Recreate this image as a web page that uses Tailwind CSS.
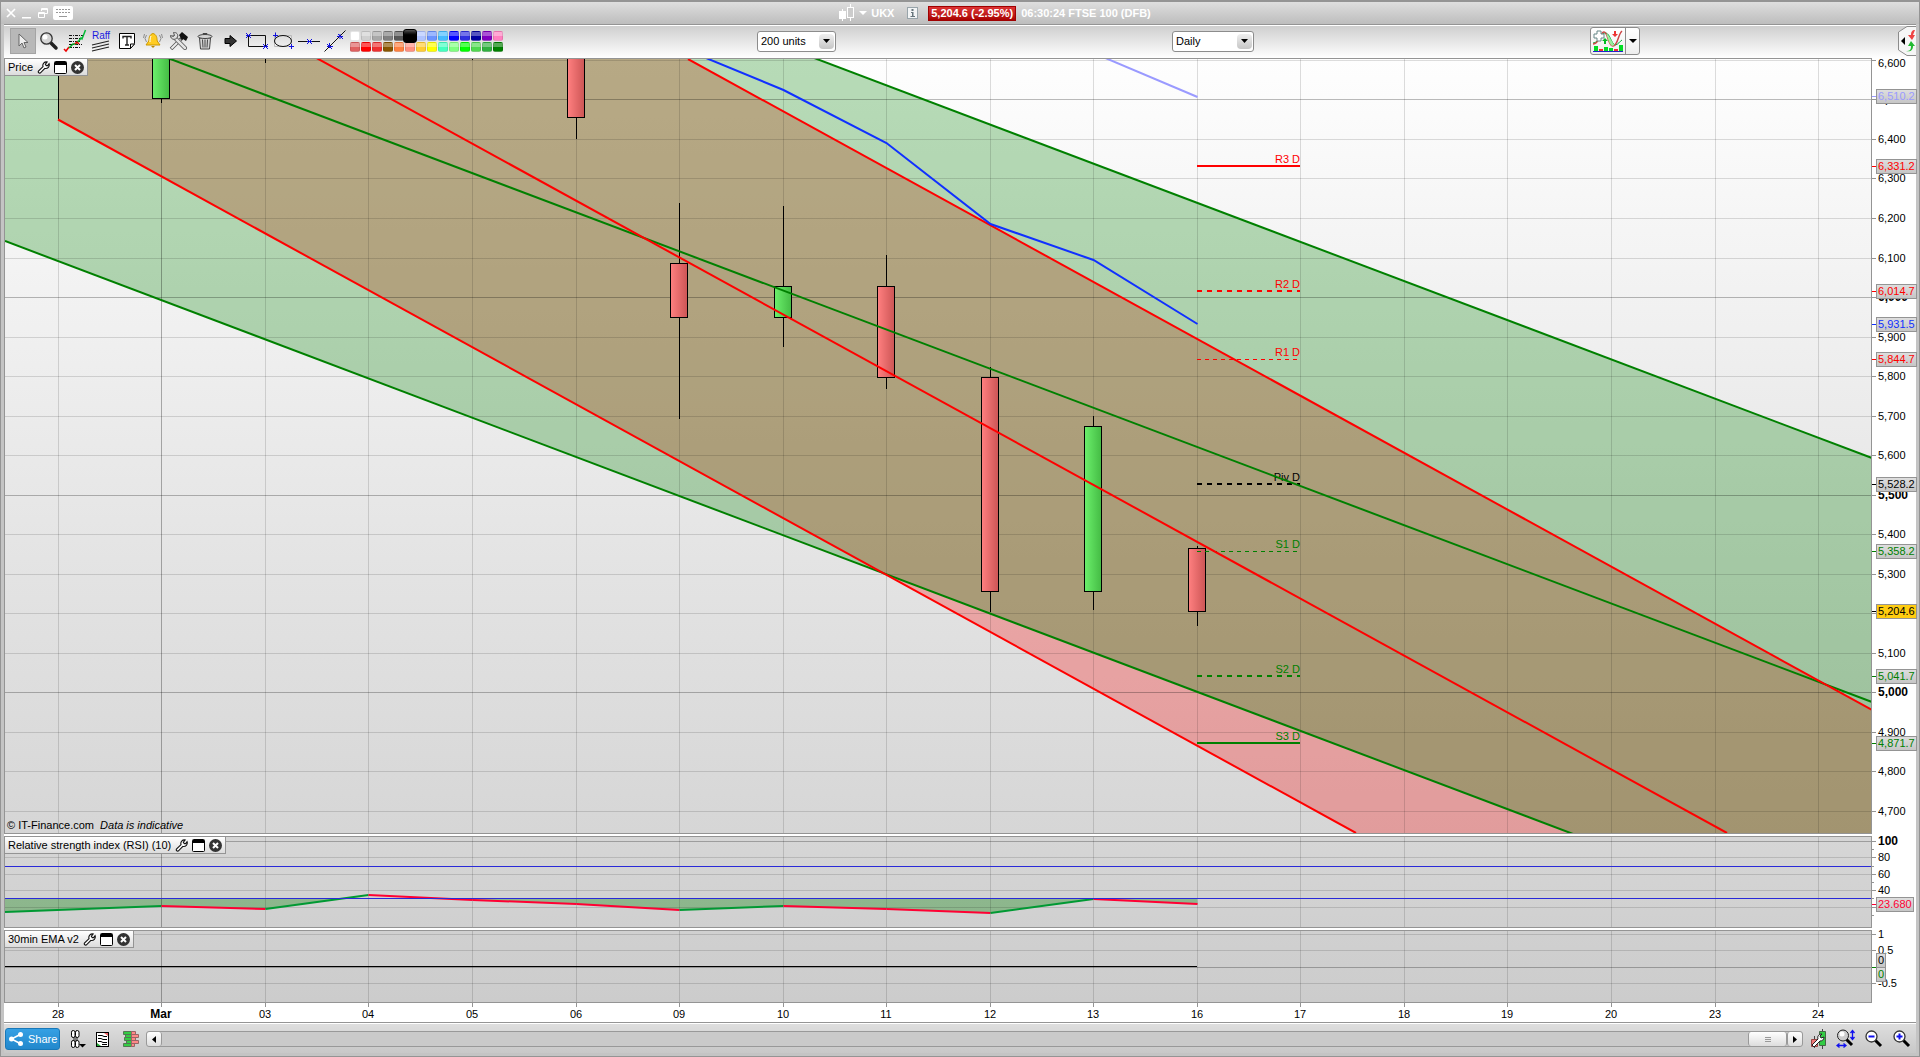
<!DOCTYPE html>
<html lang="en">
  <head>
    <meta charset="UTF-8" />
    <meta name="viewport" content="width=device-width, initial-scale=1.0" />
    <title>UKX - FTSE 100 (DFB)</title>
    <script src="https://cdn.jsdelivr.net/npm/@tailwindcss/browser@4"></script>
  </head>
  <body
    class="h-screen flex flex-col overflow-hidden border border-t-2 border-[#949494] bg-[#c4c4c4] text-[11px] leading-4 text-black font-['Liberation_Sans',Arial,sans-serif]"
  >
    <!-- Title bar -->
    <header
      class="h-[22px] shrink-0 flex items-center bg-linear-to-b from-[#dedede] to-[#bdbdbd] text-white font-bold"
    >
      <div class="w-[70px] flex items-center gap-1 pl-1">
        <button aria-label="Close" class="w-3">
          <svg width="12" height="12" viewBox="0 0 12 12" stroke="#fff" stroke-width="1.700"><path d="M2 2l8 8M10 2l-8 8" /></svg>
        </button>
        <button aria-label="Minimise" class="w-3">
          <svg width="12" height="12" viewBox="0 0 12 12"><path d="M1 10h9v1.500H1z" fill="#fff" /></svg>
        </button>
        <button aria-label="Restore" class="w-3">
          <svg width="12" height="12" viewBox="0 0 12 12" fill="none" stroke="#fff"><path d="M4.500 4V1.500h6v5H8M4 2.500h7M1.500 5.500h6v5h-6zM1 6.500h7" /></svg>
        </button>
        <button aria-label="Keyboard" class="w-5">
          <svg width="20" height="14" viewBox="0 0 20 14">
            <rect width="20" height="14" rx="2" fill="#fff" />
            <path d="M3 3.500h14M3 6.500h14" stroke="#999" stroke-dasharray="2 1" /><path d="M6 10.500h8" stroke="#999" />
          </svg>
        </button>
      </div>
      <div class="flex-1 flex items-center justify-center">
        <svg width="16" height="18" viewBox="0 0 16 18" stroke="#fff">
          <path d="M3.500 5v12M11.500 0v17" /><rect x=".5" y="7.500" width="6" height="7" fill="#fff" />
          <rect x="8.500" y="3.500" width="6" height="10" fill="#ccc" />
        </svg>
        <svg class="ml-1" width="8" height="4" viewBox="0 0 8 4"><path d="M0 0h8L4 4z" fill="#fff" /></svg>
        <span class="ml-1 w-9">UKX</span>
        <svg width="11" height="12" viewBox="0 0 11 12">
          <rect x=".5" y=".5" width="10" height="11" fill="#f2f4f5" stroke="#98a4aa" />
          <path d="M4.500 2h2v2h-2zM4 5h2.500v4H8v1H3.500V9H5V6H4z" fill="#67757c" />
        </svg>
        <span class="ml-[10px] px-[2px] h-[15px] leading-[13px] border border-[#a00000] bg-linear-to-b from-[#dd3434] to-[#aa0000]">5,204.6 (-2.95%)</span>
        <span class="ml-[5px]">06:30:24 FTSE 100 (DFB)</span>
      </div>
    </header>

    <main class="flex-1 min-h-0 flex flex-col mx-[3px] mb-[3px] border-t border-[#949494]">
      <!-- Toolbar -->
      <div class="h-[33px] shrink-0 flex items-center pb-[2px] border-t border-white bg-linear-to-b from-[#cfcfcf] to-white">
        <div class="flex pl-[6px]">
          <button aria-label="Pointer" class="w-[26px] h-[26px] flex items-center justify-center bg-[#b8b8b8] border border-[#a4a4a4]">
            <svg width="12" height="16" viewBox="0 0 12 16"><path d="M2 1v12l3-3 2 5 2-1-2-4.500h4z" fill="#eee" stroke="#666" /></svg>
          </button>
          <button aria-label="Zoom" class="w-[26px] flex items-center justify-center">
            <svg width="20" height="20" viewBox="0 0 20 20">
              <path d="M11 11l6 6" stroke="#222" stroke-width="3.500" stroke-linecap="round" />
              <circle cx="7.500" cy="7.500" r="5.700" fill="#d4d4d4" stroke="#333" stroke-width="1.300" /><circle cx="6" cy="6" r="2.500" fill="#fff" />
            </svg>
          </button>
          <button aria-label="Indicators" class="w-[26px] flex items-center justify-center">
            <svg width="24" height="24" viewBox="0 0 24 24" fill="none">
              <path d="M6 6.500h14M6 9.500h13M6 12.500h12M6 15.500h13M6 18.500h12" stroke="#111" stroke-dasharray="3 1 1 1" />
              <path d="M1 20l2 2 3-4" stroke="#e00" stroke-width="1.500" /><path d="M6 19l4-4 3 0 2-3" stroke="#0a2" stroke-width="1.500" /><path d="M12 15l2-2 2 2" stroke="#e00" stroke-width="1.500" />
              <path d="M15 13l3-4 1 1 3.500-9" stroke="#0b3" stroke-width="1.500" />
            </svg>
          </button>
          <button aria-label="Raff regression" class="w-[26px] flex flex-col items-center justify-center text-[10px] leading-[9px] text-[#1a1ae0]">
            Raff
            <svg width="20" height="12" viewBox="0 0 20 12" stroke="#222" stroke-width="1.200"><path d="M1 5l17-4M1 8l17-4M1 11l17-4" /></svg>
          </button>
          <button aria-label="Text" class="w-[26px] flex items-center justify-center">
            <svg width="16" height="16" viewBox="0 0 16 16">
              <path d="M.5.500h15v10l-4 5H.5z" fill="#fff" stroke="#000" /><path d="M15.500 11h-4v4.500z" fill="#fff" stroke="#000" />
              <path d="M4 5.500v-2h8v2M8 3.500v8.500M6 12h4" fill="none" stroke="#222" stroke-width="1.400" />
            </svg>
          </button>
          <button aria-label="Alert" class="w-[26px] flex items-center justify-center">
            <svg width="20" height="18" viewBox="0 0 20 18">
              <path d="M10 1.500c3.500 1 4 4 4.200 7.500l2.800 4H3l2.800-4C6 5.500 6.500 2.500 10 1.500z" fill="#fc2" stroke="#c90" /><path d="M8 4c-1 2-1 4-1 6" fill="none" stroke="#fff" />
              <path d="M8 14h4l-2 2z" fill="#b80" /><path d="M3.500 3L2 6.500 3.500 10M1.500 2L.5 6M16.500 3L18 6.500 16.500 10M18.500 2l1 4" fill="none" stroke="#777" stroke-width=".8" />
            </svg>
          </button>
          <button aria-label="Tools" class="w-[26px] flex items-center justify-center">
            <svg width="20" height="18" viewBox="0 0 20 18">
              <path d="M2 17L13 6" stroke="#555" stroke-width="3.500" /><path d="M2.500 16.500l9-9" stroke="#eee" stroke-width="2" />
              <path d="M5 5l11 11" stroke="#555" stroke-width="4" stroke-linecap="round" /><path d="M5 5l11 11" stroke="#e4e4e4" stroke-width="2.500" stroke-linecap="round" />
              <path d="M1.500 3.500l3 1 1-1-1-3c3-.5 5 2 4 4.500C7 8.500 1.500 8 1.500 3.500z" fill="#ddd" stroke="#555" /><path d="M10 3l3-3 6 5-2 4-3-2-1 1z" fill="#111" />
            </svg>
          </button>
          <button aria-label="Delete" class="w-[26px] flex items-center justify-center">
            <svg width="16" height="18" viewBox="0 0 16 18" stroke="#444" fill="#d4d4d4">
              <path d="M2.500 6h11L12.500 17h-9z" /><path d="M5.500 7.500l.5 8M8 7.500v8M10.500 7.500l-.5 8" /><ellipse cx="8" cy="4.500" rx="7" ry="2" /><path d="M6 2.500v-1h4v1" fill="none" />
            </svg>
          </button>
          <button aria-label="Arrow" class="w-[26px] flex items-center justify-center">
            <svg width="14" height="14" viewBox="0 0 14 14"><path d="M1 4.500h5V1.500L12.500 7 6 12.500v-3H1z" fill="#333" stroke="#000" /></svg>
          </button>
          <button aria-label="Rectangle" class="w-[26px] flex items-center justify-center">
            <svg width="24" height="18" viewBox="0 0 24 18" fill="none">
              <path d="M3.500 3.500h17v11h-17z" stroke="#111" /><path d="M1 1l5 5M6 1L1 6M1 3.500h5M18 12l5 5M23 12l-5 5M18 14.500h5" stroke="#11d" />
            </svg>
          </button>
          <button aria-label="Ellipse" class="w-[26px] flex items-center justify-center">
            <svg width="22" height="18" viewBox="0 0 22 18" fill="none">
              <path d="M2.500 3.500h17v11h-17z" stroke="#bbb" /><ellipse cx="11" cy="9" rx="8.500" ry="5.500" stroke="#111" /><path d="M3.500.5v5M1 3.500h5M19.500 12v5M17 14.500h5" stroke="#11d" />
            </svg>
          </button>
          <button aria-label="Horizontal line" class="w-[26px] flex items-center justify-center">
            <svg width="22" height="10" viewBox="0 0 22 10"><path d="M0 5.500h22" stroke="#111" /><path d="M9 3l5 5M14 3L9 8M9 5.500h5" stroke="#11d" /></svg>
          </button>
          <button aria-label="Trend line" class="w-[26px] flex items-center justify-center">
            <svg width="22" height="22" viewBox="0 0 22 22"><path d="M.5 21.500l21-21" stroke="#111" /><path d="M3 14l5 5M5.500 13v5M3 16.500h6M14 4l5 5M16 4v5M13 6.500h6" stroke="#11d" /></svg>
          </button>
        </div>
        <div id="palette" class="ml-[2px] grid grid-cols-14 gap-px w-[153px]"></div>
        <div class="grow-[254]"></div>
        <div class="relative w-[79px]">
          <select aria-label="Units" class="appearance-none block w-full h-[21px] pl-[3px] leading-[19px] border border-[#8c8c8c] rounded-[3px] bg-white"><option>200 units</option></select>
          <span class="pointer-events-none absolute right-[2px] top-[3px] w-[15px] h-[15px] rounded-sm bg-linear-to-b from-[#efefef] to-[#c6c6c6] flex items-center justify-center"><svg width="7" height="4" viewBox="0 0 7 4"><path d="M0 0h7L3.500 4z" /></svg></span>
        </div>
        <div class="grow-[336]"></div>
        <div class="relative w-[82px]">
          <select aria-label="Period" class="appearance-none block w-full h-[21px] pl-[3px] leading-[19px] border border-[#8c8c8c] rounded-[3px] bg-white"><option>Daily</option></select>
          <span class="pointer-events-none absolute right-[2px] top-[3px] w-[15px] h-[15px] rounded-sm bg-linear-to-b from-[#efefef] to-[#c6c6c6] flex items-center justify-center"><svg width="7" height="4" viewBox="0 0 7 4"><path d="M0 0h7L3.500 4z" /></svg></span>
        </div>
        <div class="grow-[336]"></div>
        <div class="flex w-[50px] h-7 border border-[#8c8c8c] rounded-[3px] bg-linear-to-b from-white to-[#eee]">
          <button aria-label="Add indicator" class="w-[34px] flex items-center justify-center">
            <svg width="32" height="24" viewBox="0 0 32 24" fill="none">
              <path d="M1 14c6 0 8-11 13-10 4 1 5 10 9 12 3 0 5-4 7-5" stroke="#0a3" /><path d="M1 15c7 0 7-12 11-12s4 14 9 14 5-12 9-15" stroke="#c44" stroke-width="1.500" />
              <path d="M14 5c3 0 6 10 9 11l-3 1c-3-2-4-8-6-12z" fill="#9e9" /><path d="M5 2h4v3h3v4H9v3H5V9H2V5h3z" fill="#fff" stroke="#688" />
              <path d="M12 15v-3h-2l3-3 3 3h-2v3z" fill="#0b2" /><path d="M22 2h2v3h2l-3 3-3-3h2z" fill="#e33" />
              <path d="M2 17h4v5H2zM12 18h4v4h-4zM17 19h4v3h-4zM27 16h4v6h-4z" fill="#0d2" /><path d="M7 20h4v2H7zM22 20h4v2h-4z" fill="#e33" /><path d="M1 22.500h30" stroke="#22c" />
            </svg>
          </button>
          <button aria-label="More indicators" class="flex-1 flex items-center justify-center border-l border-[#8c8c8c]"><svg width="8" height="4" viewBox="0 0 8 4"><path d="M0 0h8L4 4z" /></svg></button>
        </div>
        <div class="grow-[258]"></div>
        <button aria-label="Open order panel" class="w-[18px]">
          <svg width="18" height="30" viewBox="0 0 18 30">
            <path d="M18 .5H9L.5 6v18L9 29.500h9" fill="#f6f6f6" stroke="#8c8c8c" /><path d="M7 11v8l-4-4z" />
            <path d="M17 4c-3 0-4 2-4 5h-3l4 5 3-5h-2" fill="#e44" /><path d="M8 25c4 0 5-1 5-5h-3l3-5 4 5h-2c0 4-2 6-7 5z" fill="#2b3" />
          </svg>
        </button>
      </div>

      <!-- Charts and their value axes -->
      <div class="flex-1 min-h-0 flex bg-white">
        <div class="flex-1 flex flex-col gap-[2px]">
          <section class="relative flex-1 min-h-0 border border-[#949494] bg-linear-to-b from-[#fefefe] to-[#d6d6d6]">
            <svg id="price" class="absolute inset-0 w-full h-full" viewBox="5 59 1866 774" preserveAspectRatio="none">
              <defs>
                <linearGradient id="up"><stop offset="0" stop-color="#6cf06c" /><stop offset="1" stop-color="#44bb44" /></linearGradient>
                <linearGradient id="down"><stop offset="0" stop-color="#ff8080" /><stop offset="1" stop-color="#cc5555" /></linearGradient>
              </defs>
            </svg>
            <h2 class="absolute left-0 top-0 h-[17px] flex items-center gap-1 pl-[3px] pr-[3px] border-r border-b border-[#949494] bg-linear-to-b from-white to-[#dcdcdc]">Price</h2>
            <p class="absolute left-[2px] bottom-0">© IT-Finance.com &nbsp;<i>Data is indicative</i></p>
          </section>
          <section class="relative h-[92px] border border-[#949494] bg-linear-to-b from-[#d6d6d6] to-[#d0d0d0]">
            <svg id="rsi" class="absolute inset-0 w-full h-full" viewBox="5 837 1866 90" preserveAspectRatio="none"></svg>
            <h2 class="absolute left-0 top-0 h-[17px] flex items-center gap-1 pl-[3px] pr-[3px] border-r border-b border-[#949494] bg-linear-to-b from-white to-[#dcdcdc]">Relative strength index (RSI) (10)</h2>
          </section>
          <section class="relative h-[73px] border border-[#949494] bg-linear-to-b from-[#d0d0d0] to-[#cccccc]">
            <svg id="ema" class="absolute inset-0 w-full h-full" viewBox="5 931 1866 71" preserveAspectRatio="none"></svg>
            <h2 class="absolute left-0 top-0 h-[17px] flex items-center gap-1 pl-[3px] pr-[3px] border-r border-b border-[#949494] bg-linear-to-b from-white to-[#dcdcdc]">30min EMA v2</h2>
          </section>
        </div>
        <div class="w-11 flex flex-col gap-[2px]">
          <div id="priceAxis" class="relative flex-1"></div>
          <div id="rsiAxis" class="relative h-[92px]"></div>
          <div id="emaAxis" class="relative h-[73px]"></div>
        </div>
      </div>

      <!-- Date axis -->
      <div class="h-5 shrink-0 flex bg-white border-b border-[#949494]">
        <div id="dates" class="relative flex-1"></div>
        <div class="w-11"></div>
      </div>

      <!-- Bottom bar -->
      <footer class="h-[30px] shrink-0 flex items-center pl-px pr-1 pt-px border-t border-white bg-linear-to-b from-[#dedede] to-[#c8c8c8]">
        <button class="w-[55px] h-[22px] mr-[9px] flex items-center gap-[5px] pl-[3px] rounded-[3px] border border-[#1878b8] bg-linear-to-b from-[#35a0e4] to-[#2288cc] text-white">
          <svg width="14" height="14" viewBox="0 0 14 14" fill="#fff"><path d="M12 2L2.500 7l9.500 5" fill="none" stroke="#fff" stroke-width="1.500" /><circle cx="2.500" cy="7" r="2.500" /><circle cx="11.500" cy="2.500" r="2.500" /><circle cx="11.500" cy="11.500" r="2.500" /></svg>
          Share
        </button>
        <button aria-label="Link windows" class="w-[27px]">
          <svg width="18" height="18" viewBox="0 0 18 18" fill="none" stroke="#000">
            <rect x="2.500" y=".5" width="3.500" height="7" rx="1.700" fill="#fff" /><rect x="6.500" y=".5" width="3.500" height="7" rx="1.700" fill="#fff" /><rect x="2.500" y="10.500" width="3.500" height="7" rx="1.700" fill="#fff" /><rect x="6.500" y="10.500" width="3.500" height="7" rx="1.700" fill="#fff" />
            <path d="M4 8h5M4 10h5" stroke-width=".8" /><path d="M10 14h7l-3.500 3.500z" fill="#000" stroke="none" />
          </svg>
        </button>
        <button aria-label="Report" class="w-[27px]">
          <svg width="13" height="15" viewBox="0 0 13 15" fill="none"><rect x=".5" y=".5" width="12" height="14" fill="#fff" stroke="#000" /><path d="M2 3.500h4l2 1h3M2 6.500h3l2 1h4M2 9.500h3l2 1h4M6 12.500h5" stroke="#000" /><path d="M8 1h4v3z" fill="#e66" /><path d="M1 11l4 3H1z" fill="#2a3" /></svg>
        </button>
        <button aria-label="Order book" class="w-[23px]">
          <svg width="16" height="16" viewBox="0 0 16 16">
            <g fill="#3c4" stroke="#575"><path d="M.5.500h8v3h-8zM2.500 3.500h6v3h-6zM1.500 6.500h7v3h-7zM3.500 9.500h5v3h-5zM.5 12.500h8v3h-8z" /></g>
            <g fill="#f88" stroke="#966"><path d="M8.500.500h4v3h-4zM8.500 3.500h7v3h-7zM8.500 6.500h4v3h-4zM8.500 9.500h7v3h-7zM8.500 12.500h3v3h-3z" /></g>
          </svg>
        </button>
        <div class="flex-1 h-4 flex border border-[#999] rounded-[3px] bg-[#cacaca]">
          <button aria-label="Scroll left" class="w-[15px] flex items-center justify-center rounded-[3px] border-r border-[#999] bg-linear-to-b from-white to-[#ddd]"><svg width="4" height="7" viewBox="0 0 4 7"><path d="M4 0v7L0 3.500z" /></svg></button>
          <div class="flex-1"></div>
          <div class="w-[39px] flex flex-col items-center justify-center gap-px rounded-[3px] border-x border-[#999] bg-linear-to-b from-white to-[#ddd]">
            <span class="w-[6px] h-px bg-[#999]"></span><span class="w-[6px] h-px bg-[#999]"></span><span class="w-[6px] h-px bg-[#999]"></span>
          </div>
          <button aria-label="Scroll right" class="w-[15px] flex items-center justify-center rounded-[3px] border-l border-[#999] bg-linear-to-b from-white to-[#ddd]"><svg width="4" height="7" viewBox="0 0 4 7"><path d="M0 0v7l4-3.500z" /></svg></button>
        </div>
        <div class="flex items-center pl-[7px]">
          <button aria-label="Chart settings" class="w-[26px]">
            <svg width="17" height="20" viewBox="0 0 17 20"><path d="M4.500 7v12M12.500 0v20" stroke="#444" /><path d="M1.500 10.500h6v7h-6z" fill="#e77" stroke="#944" /><path d="M9.500 2.500h6v14h-6z" fill="#3c4" stroke="#464" /><path d="M2 16l6-6c-1-3 1-5 4-5l-2 2 1 2 3-1c0 3-2 4-4 4l-6 6z" fill="#fff" stroke="#222" /></svg>
          </button>
          <button aria-label="Fit zoom" class="w-[29px]">
            <svg width="20" height="20" viewBox="0 0 20 20"><path d="M10 10l6 6" stroke="#000" stroke-width="3" /><circle cx="7" cy="6.500" r="5.500" fill="#ccc" stroke="#222" /><circle cx="6" cy="5" r="2.500" fill="#fff" /><path d="M16.500 2v8M14.500 4l2-2.500 2 2.500M14.500 8l2 2.500 2-2.500M1 16.500h9M3.500 14.500L1 16.500l2.500 2M7.500 14.500l2.500 2-2.500 2" fill="none" stroke="#11e" stroke-width="1.300" /></svg>
          </button>
          <button aria-label="Zoom out" class="w-[28px]">
            <svg width="18" height="18" viewBox="0 0 18 18"><path d="M10 10l6 6" stroke="#000" stroke-width="3" /><circle cx="6.500" cy="6.500" r="5.500" fill="#fff" stroke="#333" stroke-width="1.300" /><path d="M3.500 6.500h6" stroke="#11e" stroke-width="2" /></svg>
          </button>
          <button aria-label="Zoom in" class="w-[19px]">
            <svg width="18" height="18" viewBox="0 0 18 18"><path d="M10 10l6 6" stroke="#000" stroke-width="3" /><circle cx="6.500" cy="6.500" r="5.500" fill="#fff" stroke="#333" stroke-width="1.300" /><path d="M3.500 6.500h6M6.500 3.500v6" stroke="#11e" stroke-width="2" /></svg>
          </button>
        </div>
      </footer>
    </main>

    <script>
      // Drawing colours
      const colors = [
        "#ffffff", "#d0d0d0", "#a8a8a8", "#808080", "#585858", "#000000", "#b0c4ff",
        "#6c94ff", "#44bbff", "#0000ff", "#3030e0", "#0000a0", "#8000c0", "#ff80c0",
        "#e06060", "#ff0000", "#ee3030", "#885500", "#ff8040", "#ff9080", "#ffcc33",
        "#ffff00", "#44ffc0", "#80ff80", "#00ff00", "#50d850", "#30b040", "#008000",
      ];
      document.getElementById("palette").innerHTML = colors
        .map((c, i) =>
          i === 5
            ? `<button aria-label="${c}" class="relative z-10 -m-[2px] rounded-[3px] bg-linear-to-b from-[#555] to-black to-50% border border-black"></button>`
            : `<button aria-label="${c}" class="h-[10px] rounded-[2px] border border-black/10" style="background:linear-gradient(#ffffff55 45%,#ffffff00 46%),${c}"></button>`
        )
        .join("");

      // Panel title buttons
      const tools = `
        <button aria-label="Settings"><svg width="13" height="13" viewBox="0 0 14 14"><path d="M1.500 11l5-5C5.500 3 8 .500 11 1L9 3.500l1 1.500h1.500L13 3c1 3-1.500 5.500-4.500 5l-5 5c-1.500.500-2.500-1-2-2z" fill="#fff" stroke="#111" stroke-width="1.200" /></svg></button>
        <button aria-label="Maximise"><svg width="13" height="13" viewBox="0 0 13 13"><rect x=".5" y=".5" width="12" height="12" rx="1" fill="#fff" stroke="#000" /><path d="M1 1h11v3H1z" /></svg></button>
        <button aria-label="Close panel"><svg width="13" height="13" viewBox="0 0 13 13"><circle cx="6.500" cy="6.500" r="6.500" fill="#333" /><path d="M4 4l5 5M9 4L4 9" stroke="#fff" stroke-width="2" /></svg></button>`;
      document.querySelectorAll("h2").forEach((h) => h.insertAdjacentHTML("beforeend", tools));

      const days = ["28", "Mar", "03", "04", "05", "06", "09", "10", "11", "12", "13", "16", "17", "18", "19", "20", "23", "24"];
      const dayX = [58, 161, 265, 368, 472, 576, 679, 783, 886, 990, 1093, 1197, 1300, 1404, 1507, 1611, 1715, 1818].map((x) => x + 0.5);

      const line = (x1, y1, x2, y2, stroke, w = 1, dash = "") =>
        `<line x1="${x1}" y1="${y1}" x2="${x2}" y2="${y2}" stroke="${stroke}" stroke-width="${w}" stroke-dasharray="${dash}" />`;
      const poly = (pts, fill) => `<polygon points="${pts}" fill="${fill}" />`;
      const path = (pts, stroke, w = 2) => `<polyline points="${pts}" fill="none" stroke="${stroke}" stroke-width="${w}" />`;
      const grid = (top, bottom, rows) =>
        dayX.map((x, i) => line(x, top, x, bottom, i === 1 ? "#0000004d" : "#00000022")).join("") +
        rows.map(([y, major]) => line(5, y, 1871, y, major ? "#00000044" : "#00000022")).join("");

      // Price panel
      const priceY = (p) => Math.floor(60.4 + (6600 - p) * 0.39526) + 0.5;
      const prices = [];
      for (let p = 6600; p >= 4700; p -= 100) prices.push(p);

      let out = "";
      out += poly("58,-11 58,119.500 1400,857.500 1872,857 1872,710 688,59", "rgba(255,0,0,.27)");
      out += poly("5,-248 1872,458 1872,947 5,241", "rgba(0,128,0,.28)");
      out += grid(59, 833, prices.map((p) => [priceY(p), p % 500 === 0]));
      out += line(58.5, 59, 58.5, 119, "#000");

      const candles = [
        [1, "up", 40, 98, 40, 103], [2, "", 0, 0, 59, 63], [4, "", 0, 0, 59, 60], [5, "down", 40, 117, 40, 139],
        [6, "down", 263, 317, 203, 419], [7, "up", 286, 317, 206, 347], [8, "down", 286, 377, 255, 389],
        [9, "down", 377, 591, 367, 612], [10, "up", 426, 591, 416, 610], [11, "down", 548, 611, 546, 626],
      ];
      for (const [i, dir, top, bottom, high, low] of candles) {
        out += line(dayX[i], high, dayX[i], low, "#000");
        if (dir) out += `<rect x="${dayX[i] - 9}" y="${top + 0.5}" width="17" height="${bottom - top}" fill="url(#${dir})" stroke="#000" />`;
      }

      const pivots = [
        ["R3 D", 166, "#ff0000", 2, ""], ["R2 D", 291, "#ff0000", 2, "5 5"], ["R1 D", 359.5, "#ff0000", 1, "4 4"],
        ["Piv D", 484, "#000000", 2, "5 5"], ["S1 D", 551.5, "#008000", 1, "4 4"], ["S2 D", 676, "#008000", 2, "5 5"], ["S3 D", 743, "#008000", 2, ""],
      ];
      for (const [name, y, color, w, dash] of pivots) {
        out += line(1197, y, 1300, y, color, w, dash);
        out += `<text x="1300" y="${Math.floor(y) - 3}" text-anchor="end" font-size="11" fill="${color}">${name}</text>`;
      }

      out += path("5,-248 1872,458", "#008000") + path("5,-3.500 1872,702", "#008000") + path("5,241 1872,947", "#008000");
      out += path("688,59 1872,710", "#ff0000") + path("58,-84 1727,833", "#ff0000") + path("58,119.500 1356,833", "#ff0000");
      out += path("706,58 783.5,90 886.5,143 990.5,224 1093.5,260 1197.5,324", "#1030ff");
      out += path("1093.5,53 1197.5,97", "#9a9aff");
      document.getElementById("price").insertAdjacentHTML("beforeend", out);

      // RSI panel
      const rsi = [[5, 912], [161.5, 906], [265.5, 909], [368.5, 895], [472.5, 900], [576.5, 904], [679.5, 910], [783.5, 906], [886.5, 909], [990.5, 913], [1093.5, 899], [1197.5, 904]];
      out = `<clipPath id="low"><rect x="5" y="898" width="1866" height="29" /></clipPath>`;
      out += `<polygon clip-path="url(#low)" points="5,898 ${rsi.join(" ")} 1197,898" fill="rgba(0,128,0,.33)" />`;
      out += grid(837, 927, [[841.5, true], [857.5], [874.5], [890.5], [907.5]]);
      rsi.slice(1).forEach(([x, y], i) => {
        out += line(rsi[i][0], rsi[i][1], x, y, y < rsi[i][1] ? "#009933" : "#ff0033", 2);
      });
      out += line(5, 866.5, 1871, 866.5, "#2a2ad8") + line(5, 898.5, 1871, 898.5, "#2a2ad8");
      document.getElementById("rsi").innerHTML = out;

      // EMA panel
      document.getElementById("ema").innerHTML =
        grid(931, 1002, [[934.5], [950.5], [967.5, true], [983.5]]) + line(5, 966.5, 1197, 966.5, "#000");

      // Value axes
      const tick = (y, w, color) => `<span class="absolute left-0 h-px" style="top:${y}%;width:${w}px;background:${color}"></span>`;
      const axis = (id, top, height, labels, tags, minor = []) => {
        const pct = (y) => (Math.floor(y) - top) / height * 100;
        document.getElementById(id).innerHTML =
          labels.map(([y, text, bold]) =>
            tick(pct(y), 4, "#949494") +
            `<span class="absolute left-[6px] -mt-2 ${bold ? "font-bold text-[12px]" : ""}" style="top:${pct(Math.max(y, 63))}%">${text}</span>`
          ).join("") +
          minor.map((y) => tick(pct(y), 2, "#949494")).join("") +
          tags.map(([y, text, color, fill, shift = 0]) =>
            tick(pct(y), 4, color) +
            `<span class="absolute left-1 -mt-[7px] h-[15px] px-px leading-[13px] border border-[#949494] ${fill ? "bg-[#ffcc11]" : "bg-linear-to-b from-[#dedede] to-[#c6c6c6]"}" style="top:${pct(y + shift)}%;color:${color}">${text}</span>`
          ).join("");
      };
      axis("priceAxis", 58, 776,
        prices.map((p) => [priceY(p), p.toLocaleString("en-US"), p % 500 === 0]),
        [
          [96, "6,510.2", "#9a9aff"], [166, "6,331.2", "#ff0000"], [291, "6,014.7", "#ff0000"], [324, "5,931.5", "#1030ff"],
          [359, "5,844.7", "#ff0000"], [484, "5,528.2", "#000000"], [551, "5,358.2", "#008000"], [611, "5,204.6", "#000000", true],
          [676, "5,041.7", "#008000"], [743, "4,871.7", "#008000"],
        ]);
      axis("rsiAxis", 836, 92,
        [[841, "100", true], [857, "80"], [874, "60"], [890, "40"], [907, ""]],
        [[904, "23.680", "#ff0033"]], [849, 866, 882, 898, 915]);
      axis("emaAxis", 930, 73,
        [[934, "1"], [950, "0.5"], [983, "-0.5"]],
        [[967, "0", "#000000", false, -7], [967, "0", "#008000", false, 7]]);

      // Date axis
      document.getElementById("dates").innerHTML = days
        .map((d, i) => {
          const left = ((Math.floor(dayX[i]) - 4) / 1868) * 100;
          return `<span class="absolute top-0 w-px h-1 bg-[#949494]" style="left:${left}%"></span>
            <span class="absolute top-[3px] -translate-x-1/2 ${d === "Mar" ? "font-bold text-[12px]" : ""}" style="left:${left}%">${d}</span>`;
        })
        .join("");
    </script>
  </body>
</html>
